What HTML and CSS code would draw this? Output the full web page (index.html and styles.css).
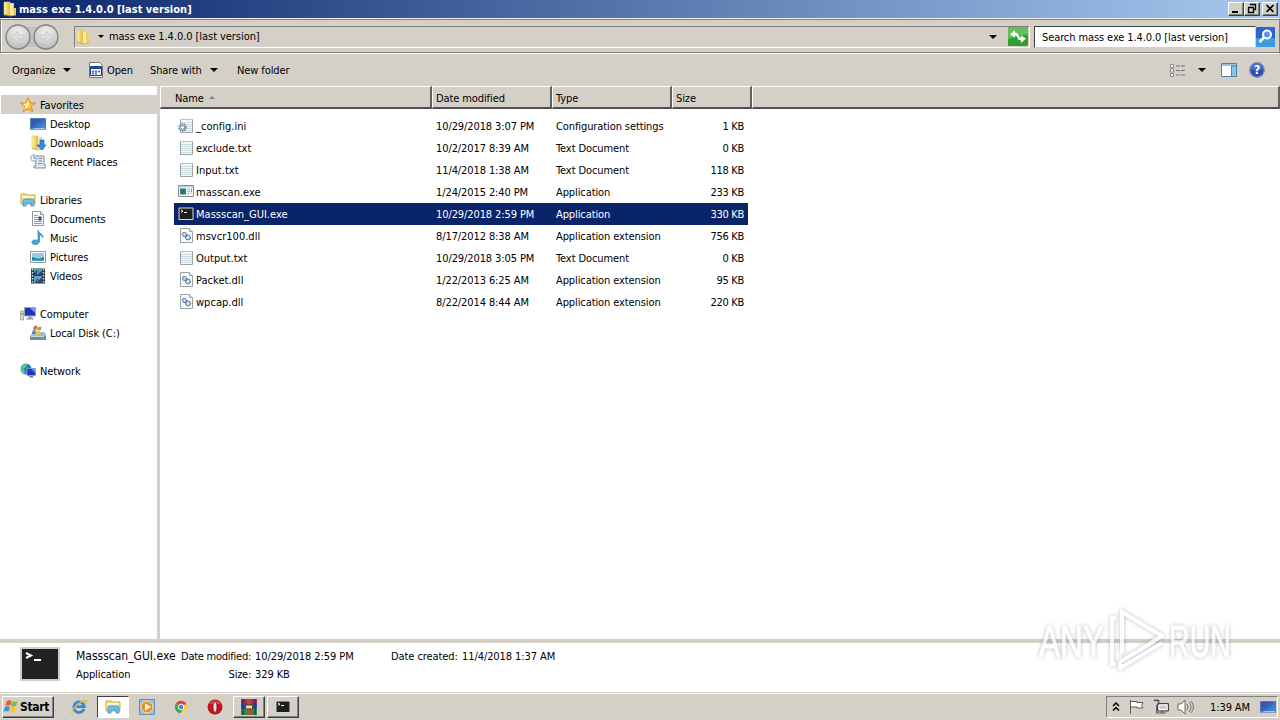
FILE: index.html
```html
<!DOCTYPE html>
<html lang="en">
<head>
  <meta charset="UTF-8">
  <title>mass exe 1.4.0.0 [last version]</title>
  <link rel="stylesheet" href="styles.css">
</head>
<body>
  <!-- icon set -->
  <svg width="0" height="0" class="defs">
    <defs>
      <linearGradient id="gGold" x1="0" x2="1"><stop offset="0" stop-color="#fdf3ae"/><stop offset="1" stop-color="#e2b93b"/></linearGradient>
      <linearGradient id="gBlue" x1="0" y1="0" x2="1" y2="1"><stop offset="0" stop-color="#1b3f9c"/><stop offset="1" stop-color="#4f9be6"/></linearGradient>
      <radialGradient id="gNav" cx=".5" cy=".3" r=".75"><stop offset="0" stop-color="#f0f0f0"/><stop offset=".6" stop-color="#d0d0d0"/><stop offset="1" stop-color="#b4b4b4"/></radialGradient>
    </defs>
    <symbol id="folder" viewBox="0 0 16 16">
      <path d="M2 1h6v13H2z" fill="url(#gGold)" stroke="#e3c765" stroke-width=".6"/>
      <path d="M8 2h4v5h2v7l-6 1z" fill="#ecca62"/>
      <path d="M8 2l3 1v5l1 6-4 1z" fill="#fbeb9b"/>
      <path d="M2 13l6 2 6-1" fill="none" stroke="#cfa740" stroke-width=".8"/>
    </symbol>
    <symbol id="star" viewBox="0 0 16 16"><path d="M8 .8l2 5 5.4.3-4.200 3.400 1.500 5.200L8 11.800l-4.700 2.900 1.500-5.200L.6 6.100 6 5.800z" fill="#fdc62f" stroke="#e2892a"/><path d="M8 3l1.300 3.600L8 10 4 12l1.300-3L3 7l3.500-.4z" fill="#fff09a"/></symbol>
    <symbol id="desktop" viewBox="0 0 16 16"><path d="M.5 2.500h15v11H.5z" fill="url(#gBlue)" stroke="#5579b4"/><path d="M1 3h8L1 9z" fill="#3a58ab"/><path d="M1 12h14v1.500H1z" fill="#a7c5e8"/><path d="M1 12h3v1H1z" fill="#2ca3dc"/></symbol>
    <symbol id="downloads" viewBox="0 0 16 16"><use href="#folder"/><path d="M10 5h4v5h2l-4 5-5-5h3z" fill="#2f8fdc" stroke="#1c62ae" stroke-width=".7"/></symbol>
    <symbol id="recent" viewBox="0 0 16 16"><path d="M5 2h9v9h2v3H4v-2h2z" fill="#dce7ee" stroke="#7c93a3"/><circle cx="4" cy="4" r="3.300" fill="#eef4f8" stroke="#93a8b5"/><path d="M4 2v2.200h2M9 4.500h3M9 7h3M8 9.500h4" fill="none" stroke="#6d8aa0"/></symbol>
    <symbol id="libs" viewBox="0 0 16 16"><path d="M1 2h5l1 1h8v9H1z" fill="#f6df82" stroke="#cfa93e"/><path d="M2 5h12" stroke="#fff7c8" stroke-width="2"/><path d="M3 9q0-2 2-2h7q2 0 2 2v5h-3v-3H6v3H3z" fill="#6cc0ec" stroke="#3a91c8" stroke-width=".8"/></symbol>
    <symbol id="doc" viewBox="0 0 16 16"><path d="M2.500.5h8l3 3v11h-11z" fill="#fff" stroke="#8a98a8"/><path d="M10.500.5v3h3" fill="#dce6ee" stroke="#8a98a8"/><path d="M4 4.500h4M4 6.500h4M4 8.500h4M4 10.500h8M4 12.500h8" stroke="#7ba0c6"/><path d="M8.500 5.500h3v4h-3z" fill="#274c86"/></symbol>
    <symbol id="music" viewBox="0 0 16 16"><path d="M8 0c0 3 5 3 5 8-1-3-3-3-3.500-3v6c0 3-3 4-5.500 3.400S1 11 4 10c1.500-.3 3 0 4 .5z" fill="#43a9de" stroke="#1d74b4" stroke-width=".6"/></symbol>
    <symbol id="pics" viewBox="0 0 16 16"><path d="M.5 2.500h15v11H.5z" fill="#fff" stroke="#8c99a3"/><path d="M2 4h12v8H2z" fill="#8fcdee"/><path d="M2 8c3 1 7 3 12 0v3H2z" fill="#287d71"/><path d="M2 10.500h12V12H2z" fill="#3da8d4"/></symbol>
    <symbol id="videos" viewBox="0 0 16 16"><path d="M1 .5h14v15H1z" fill="#2b3540"/><path d="M4 1h8v6H4z" fill="#4a9dc6"/><path d="M4 8h8v7H4z" fill="#57a9d0"/><path d="M4 5l3-3 2 3 3-2v4H4zM5 15l2-5 2 2 3-3v6z" fill="#1d4b85"/><path d="M7 3l2 2-2 2zM8 10l1 2-2 2z" fill="#d67c5e"/><path d="M2.500 1v14M13.500 1v14" stroke="#e3e9ec" stroke-width="1.400" stroke-dasharray="1.500 1.500"/></symbol>
    <symbol id="computer" viewBox="0 0 16 16"><path d="M.5 5h3v9h-3z" fill="#d6dcd2" stroke="#8a938b" stroke-width=".7"/><path d="M1 7h2v2H1z" fill="#77c14c"/><path d="M4.500 1.500h11v8.500h-11z" fill="#2033b4" stroke="#9aa3b8"/><path d="M10 2h5v5z" fill="#7797ee"/><path d="M8.500 10.500h3V12h2v1.500h-7V12h2z" fill="#8d97a5"/></symbol>
    <symbol id="disk" viewBox="0 0 16 16"><path d="M2 9l2-2h10l2 2v5H0v-3z" fill="#a7bac4"/><path d="M0 11h16v4H0z" fill="#6d8d9c"/><path d="M1 11.500h13" stroke="#c6dbe4"/><path d="M12 13h2v1h-2z" fill="#58d547"/><use href="#winflag" x="1" y="0" width="12" height="11"/></symbol>
    <symbol id="winflag" viewBox="0 0 16 16"><path d="M3.500 2C6 .5 7 1.500 8.500 2L7 7.200C5 6.300 4 6.500 2 7.300z" fill="#ef5b28"/><path d="M9.300 2.300c2 1 3.500.7 5.700-.3l-1.500 5.300c-2 1-3.700.8-5.600.1z" fill="#83bb3d"/><path d="M1.700 8.300c2-1 3.500-.8 5-.1L5.200 13.500c-1.700-.8-3-.8-5.200.1z" fill="#3b8ede"/><path d="M7.600 8.500c2 .8 3.500.9 5.600 0l-1.500 5.300c-2 1-3.600.7-5.500-.1z" fill="#fbc42e"/></symbol>
    <symbol id="network" viewBox="0 0 16 16"><circle cx="6" cy="6" r="5.500" fill="#2b83b9"/><path d="M1 4c2-3 4-3 6-3L6 4 3 6l2 3-1 2C1 9 .5 7 1 4z" fill="#5ccb86"/><path d="M7 5.500h8.500v7H7z" fill="#1a39bd" stroke="#8c9fcf" stroke-width=".8"/><path d="M11 6h4v4z" fill="#6989ea"/><path d="M9.500 13h3.500v1.500H9.500z" fill="#637489"/></symbol>
    <symbol id="txt" viewBox="0 0 16 16"><path d="M2.500 1.500h12v13h-12z" fill="#f4f8f8" stroke="#9aa2a2"/><path d="M3 4.500h11M3 6.500h11M3 8.500h11M3 10.500h11M3 12.500h11" stroke="#c9dade"/><path d="M3 1.500h11" stroke="#e8eeee" stroke-width="2" stroke-dasharray="1 1.500"/></symbol>
    <symbol id="ini" viewBox="0 0 16 16"><use href="#txt"/><circle cx="4.500" cy="9.500" r="3.500" fill="#e3eaee" stroke="#657b8d" stroke-width="1.600" stroke-dasharray="1.400 .8"/><circle cx="4.500" cy="9.500" r="2" fill="#fff" stroke="#657b8d"/></symbol>
    <symbol id="app" viewBox="0 0 16 16"><path d="M.5 1.500h15v11H.5z" fill="#f6f8f8" stroke="#838e94"/><path d="M1 2h14v1.500H1z" fill="#c5d2da"/><path d="M2 4.500h6v6H2z" fill="#31826c"/><path d="M4 5.500h2v4H4z" fill="#2d6b84"/><path d="M9.500 5.500h2M9.500 7.500h2M9.500 9.500h2M13.500 4.500v4" stroke="#8198a6"/></symbol>
    <symbol id="dll" viewBox="0 0 16 16"><path d="M2.500.5h9l3 3v11h-12z" fill="#fbfcfc" stroke="#9aa2a2"/><path d="M11.500.5v3h3" fill="#e8edef" stroke="#9aa2a2"/><circle cx="6.500" cy="6.500" r="2" fill="#d8e8f4" stroke="#476f9c" stroke-width="1.300" stroke-dasharray="1.300 .5"/><circle cx="10" cy="9.500" r="2.300" fill="#d8e8f4" stroke="#3c659a" stroke-width="1.300" stroke-dasharray="1.300 .5"/></symbol>
    <symbol id="term" viewBox="0 0 16 16"><path d="M1 2h14v11.500H1z" fill="#1e1e1e" stroke="#d8d8d8"/><path d="M3 4l2 1.200L3 6.500M6 6.500h3" fill="none" stroke="#fff"/></symbol>
  </svg>

  <div class="titlebar">
    <svg class="ico"><use href="#folder"/></svg>
    <span class="title">mass exe 1.4.0.0 [last version]</span>
    <div class="winbtns">
      <span class="winbtn"><svg viewBox="0 0 14 12"><path d="M3 8h6v2H3z"/></svg></span>
      <span class="winbtn"><svg viewBox="0 0 14 12"><path d="M5.500 2v-.5h5v5H9M5 1.500h6M3.500 5v4.500h5V5M3 4.500h6" fill="none" stroke="#000" stroke-width="1.300"/></svg></span>
      <span class="winbtn close"><svg viewBox="0 0 14 12"><path d="M3.500 2l7 7M10.500 2l-7 7" stroke="#000" stroke-width="1.700"/></svg></span>
    </div>
  </div>

  <div class="addressband">
    <svg class="nav" viewBox="0 0 56 28">
      <rect x="7" y="4" width="42" height="20" rx="8" fill="#c6c3bf"/>
      <circle cx="14" cy="14" r="12" fill="url(#gNav)" stroke="#82807d" stroke-width="1.300"/>
      <circle cx="42" cy="14" r="12" fill="url(#gNav)" stroke="#82807d" stroke-width="1.300"/>
      <path d="M14 8l-6 6 6 6v-4h6v-4h-6zM42 8l6 6-6 6v-4h-6v-4h6z" fill="#dedede" stroke="#cacaca"/>
    </svg>
    <div class="address">
      <svg class="ico"><use href="#folder"/></svg>
      <i class="arrow small"></i>
      <span>mass exe 1.4.0.0 [last version]</span>
      <i class="arrow"></i>
      <svg class="refresh" viewBox="0 0 20 19">
        <rect width="20" height="19" rx="1" fill="#2f9f36"/><path d="M0 0h20v7L0 12z" fill="#62bf5a"/>
        <path d="M7 3L2 7.500l5 3V8.500c2 0 3 2 3 5 2-4 0-8-3-8zM13 16l5-4.500-5-3v2c-2 0-3-2-3-5-2 4 0 8 3 8z" fill="#fff"/>
      </svg>
    </div>
    <div class="search">Search mass exe 1.4.0.0 [last version]</div>
    <svg class="searchbtn" viewBox="0 0 19 20">
      <rect width="19" height="20" rx="1" fill="#2b63d0"/><path d="M0 11h19v9H0z" fill="#3b9be5"/>
      <circle cx="11" cy="7.500" r="4" fill="#5c94e8" stroke="#fff" stroke-width="2"/><path d="M8 10.500L3.500 15" stroke="#fff" stroke-width="2.500"/>
    </svg>
  </div>

  <div class="toolbar">
    <span class="t-org">Organize</span><i class="arrow"></i>
    <svg class="ico open" viewBox="0 0 16 16"><path d="M1.500.5h10l3 3v12h-13z" fill="#fff" stroke="#777"/><path d="M2.500 4.500h11v9h-11z" fill="#eaf1fb" stroke="#1b397f"/><path d="M2 4h12v3H2z" fill="#21469b"/><path d="M4 9.500h2m1 0h2m1 0h2M4 11.500h2m1 0h2" stroke="#45679f" stroke-width="1.300"/></svg>
    <span class="t-open">Open</span>
    <span class="t-share">Share with</span><i class="arrow"></i>
    <span class="t-new">New folder</span>
    <div class="viewtools">
      <svg class="view" viewBox="0 0 16 13"><path d="M.5.500h3v3h-3zM.5 5h3v3h-3zM.5 9.500h3v3h-3z" fill="#fff" stroke="#85878a"/><path d="M6 2h4m1 0h4M6 6.500h4m1 0h4M6 11h4m1 0h4" stroke="#6c7581"/></svg>
      <i class="arrow"></i>
      <svg class="pane" viewBox="0 0 17 14"><path d="M.5.500h15v13H.5z" fill="#fff" stroke="#4d82a5"/><path d="M1 1h14v2H1z" fill="#9dc4dc"/><path d="M10.500 3h5v10.500h-5z" fill="#85c5e6" stroke="#4d82a5"/></svg>
      <svg class="help" viewBox="0 0 16 16"><circle cx="8" cy="8" r="7.300" fill="#2951b3" stroke="#8093ba" stroke-width="1.300"/><path d="M2 7a6 6 0 0 1 12 0q-6 2-12 0z" fill="#4d73c7"/><text x="8" y="12.300" text-anchor="middle" font-size="12" font-weight="bold" fill="#fff">?</text></svg>
    </div>
  </div>

  <div class="main">
    <div class="sidebar">
      <div class="node root selected"><svg class="ico"><use href="#star"/></svg><span>Favorites</span></div>
      <div class="node"><svg class="ico"><use href="#desktop"/></svg><span>Desktop</span></div>
      <div class="node"><svg class="ico"><use href="#downloads"/></svg><span>Downloads</span></div>
      <div class="node last"><svg class="ico"><use href="#recent"/></svg><span>Recent Places</span></div>
      <div class="node root"><svg class="ico"><use href="#libs"/></svg><span>Libraries</span></div>
      <div class="node"><svg class="ico"><use href="#doc"/></svg><span>Documents</span></div>
      <div class="node"><svg class="ico"><use href="#music"/></svg><span>Music</span></div>
      <div class="node"><svg class="ico"><use href="#pics"/></svg><span>Pictures</span></div>
      <div class="node last"><svg class="ico"><use href="#videos"/></svg><span>Videos</span></div>
      <div class="node root"><svg class="ico"><use href="#computer"/></svg><span>Computer</span></div>
      <div class="node last"><svg class="ico"><use href="#disk"/></svg><span>Local Disk (C:)</span></div>
      <div class="node root"><svg class="ico"><use href="#network"/></svg><span>Network</span></div>
    </div>
    <div class="files">
      <div class="header">
        <div class="col name">Name<i class="sort"></i></div>
        <div class="col">Date modified</div>
        <div class="col">Type</div>
        <div class="col">Size</div>
        <div class="col"></div>
      </div>
      <div class="rows">
        <div class="row"><svg class="ico"><use href="#ini"/></svg><span class="file">_config.ini</span><span>10/29/2018 3:07 PM</span><span>Configuration settings</span><span class="size">1 KB</span></div>
        <div class="row"><svg class="ico"><use href="#txt"/></svg><span class="file">exclude.txt</span><span>10/2/2017 8:39 AM</span><span>Text Document</span><span class="size">0 KB</span></div>
        <div class="row"><svg class="ico"><use href="#txt"/></svg><span class="file">Input.txt</span><span>11/4/2018 1:38 AM</span><span>Text Document</span><span class="size">118 KB</span></div>
        <div class="row"><svg class="ico"><use href="#app"/></svg><span class="file">masscan.exe</span><span>1/24/2015 2:40 PM</span><span>Application</span><span class="size">233 KB</span></div>
        <div class="row selected"><svg class="ico"><use href="#term"/></svg><span class="file">Massscan_GUI.exe</span><span>10/29/2018 2:59 PM</span><span>Application</span><span class="size">330 KB</span></div>
        <div class="row"><svg class="ico"><use href="#dll"/></svg><span class="file">msvcr100.dll</span><span>8/17/2012 8:38 AM</span><span>Application extension</span><span class="size">756 KB</span></div>
        <div class="row"><svg class="ico"><use href="#txt"/></svg><span class="file">Output.txt</span><span>10/29/2018 3:05 PM</span><span>Text Document</span><span class="size">0 KB</span></div>
        <div class="row"><svg class="ico"><use href="#dll"/></svg><span class="file">Packet.dll</span><span>1/22/2013 6:25 AM</span><span>Application extension</span><span class="size">95 KB</span></div>
        <div class="row"><svg class="ico"><use href="#dll"/></svg><span class="file">wpcap.dll</span><span>8/22/2014 8:44 AM</span><span>Application extension</span><span class="size">220 KB</span></div>
      </div>
    </div>
  </div>

  <div class="details">
    <svg class="thumb" viewBox="0 0 40 34"><path d="M1 1h38v32H1z" fill="#222" stroke="#cfcfcf" stroke-width="2"/><path d="M6 6l5 2.500L6 11M14 13h7" fill="none" stroke="#fff" stroke-width="2"/></svg>
    <div class="grid">
      <span class="fname">Massscan_GUI.exe</span><span class="label">Date modified:</span><span>10/29/2018 2:59 PM</span><span>Date created:</span><span>11/4/2018 1:37 AM</span>
      <span>Application</span><span class="label">Size:</span><span>329 KB</span>
    </div>
  </div>

  <div class="taskbar">
    <div class="start"><svg viewBox="0 0 16 15"><use href="#winflag" width="16" height="15"/></svg>Start</div>
    <div class="tasks">
      <div class="task"><svg class="ico" viewBox="0 0 16 16"><path d="M13 10a5.300 5.300 0 1 1 .3-2.300H5" fill="none" stroke="#2f8ade" stroke-width="2.700"/><path d="M1 14.500C-.5 11 9 2 14.500 1.500c2 0 .5 3-.5 4" fill="none" stroke="#e5b83c" stroke-width="1.300"/></svg></div>
      <div class="task active"><svg class="ico"><use href="#libs"/></svg></div>
      <div class="task"><svg class="ico" viewBox="0 0 16 16"><path d="M.5.500h15v15H.5z" fill="#91c1e4" stroke="#5d91be"/><circle cx="8" cy="8" r="6" fill="#f18e21" stroke="#fbe0b5"/><path d="M6 4.500l6 3.500-6 3.500z" fill="#fff"/></svg></div>
      <div class="task"><svg class="ico chrome" viewBox="0 0 16 16"><circle cx="8" cy="8" r="7" fill="#fccf33"/><path d="M8 8L2 4.300A7 7 0 0 1 14.500 5H8z" fill="#df4634"/><path d="M2 4.300A7 7 0 0 0 7.500 15l2.700-5L8 8z" fill="#3aa757"/><circle cx="8" cy="8" r="3.200" fill="#4285e8" stroke="#fff"/></svg></div>
      <div class="task"><svg class="ico" viewBox="0 0 16 16"><circle cx="8" cy="8" r="7.500" fill="#c2151b"/><path d="M2 5a7 7 0 0 1 12 0z" fill="#d24a45"/><ellipse cx="8" cy="8" rx="2" ry="5.500" fill="#e8dddd" stroke="#7e090d" stroke-width=".7"/></svg></div>
      <div class="task raised"><svg class="ico" viewBox="0 0 16 16"><path d="M0 0h16v5H0z" fill="#a42a65"/><path d="M0 5h16v5.500H0z" fill="#2c50b1"/><path d="M0 10.500h16V16H0z" fill="#2c8c3d"/><path d="M6 0h4v16H6z" fill="#c2482c"/><path d="M4.500 6h7v4h-7z" fill="#f0dc9c" stroke="#55391c"/><path d="M2 0v16M14 0v16" stroke="#1a2746"/></svg></div>
      <div class="task raised"><svg class="ico"><use href="#term"/></svg></div>
    </div>
    <div class="tray">
      <svg class="chev" viewBox="0 0 8 10"><path d="M1 4l3-3 3 3M1 8.500l3-3 3 3" fill="none" stroke="#000" stroke-width="1.500"/></svg>
      <svg class="flag" viewBox="0 0 16 16"><path d="M1.500 1v14M2 2.500h6v1h6l-1.500 3L14 9H8V8H2" fill="#fff" stroke="#5b5b5b"/></svg>
      <svg class="net" viewBox="0 0 16 16"><path d="M4.500 4.500h11v7.500h-11z" fill="#bbb" stroke="#444"/><path d="M6 6h8v4.500H6z" fill="#ccc" stroke="#fff"/><path d="M.7 1.500h5v3.500l-2 1.500v7.500H13M2 0v2.500M4.500 0v2.500M9 12v2" fill="none" stroke="#555" stroke-width="1.200"/></svg>
      <svg class="vol" viewBox="0 0 17 16"><path d="M1 5h3l4-4v14l-4-4H1z" fill="#fff" stroke="#666"/><path d="M10 5q2 3 0 6M12 3q4 5 0 10M14 2q5 6 0 12" fill="none" stroke="#777"/></svg>
      <span class="clock">1:39 AM</span>
      <svg class="ico"><use href="#desktop"/></svg>
    </div>
  </div>

  <svg class="watermark" viewBox="0 0 250 80">
    <g class="wm-text">
      <text x="9" y="57" textLength="65" lengthAdjust="spacingAndGlyphs">ANY</text>
      <text x="139" y="57" textLength="62" lengthAdjust="spacingAndGlyphs">RUN</text>
    </g>
    <path d="M86 18h-4v46h4M92 54V12l40 24-24 15M90 68l42-25M90 62l30-18M90 62v8" fill="none" stroke="#fff" stroke-width="4"/>
  </svg>
</body>
</html>
```

FILE: styles.css
```css
* { box-sizing: border-box; }
body { margin: 0; width: 1280px; height: 720px; overflow: hidden; display: flex; flex-direction: column; background: #d4d0c8; color: #000; font: 11px "DejaVu Sans Condensed", "DejaVu Sans", sans-serif; font-stretch: condensed; letter-spacing: -0.1px; white-space: nowrap; }
svg { display: block; flex: none; }
.defs { position: absolute; }
.ico { width: 16px; height: 16px; }
.arrow { width: 0; height: 0; border: 4px solid transparent; border-top-color: #000; border-bottom: 0; }
.arrow.small { border-width: 3px; border-bottom: 0; }

/* title bar */
.titlebar { height: 18px; display: flex; align-items: center; padding: 0 2px; background: linear-gradient(90deg, #0a246a, #a6caf0); color: #fff; font-weight: bold; letter-spacing: 0.02px; }
.title { margin-left: 1px; flex: 1; }
.winbtns { display: flex; }
.winbtn { width: 16px; height: 14px; background: #d4d0c8; border: 1px solid; border-color: #fff #404040 #404040 #fff; box-shadow: inset -1px -1px #808080; }
.winbtn.close { margin-left: 2px; }
.winbtn svg { width: 14px; height: 12px; }

/* address band */
.addressband { height: 36px; display: flex; align-items: center; padding: 1px 2px 0 3px; border: 1px solid #808080; border-top-color: #f4f2ee; border-bottom-color: #fff; box-shadow: inset 0 1px #808080, inset 0 -1px #808080, inset 1px 0 #fff; }
.nav { width: 56px; height: 28px; }
.address { margin-left: 14px; width: 956px; height: 22px; display: flex; align-items: center; border: 1px solid; border-color: #808080 #fff #fff #808080; letter-spacing: -0.06px; }
.address .arrow.small { margin: 0 5px 0 7px; }
.address span { flex: 1; }
.refresh { width: 20px; height: 19px; margin: 0 1px 0 11px; }
.search { margin-left: 4px; width: 222px; height: 22px; padding: 0 7px; line-height: 21px; background: #fff; border: 1px solid; border-color: #404040 #d4d0c8 #d4d0c8 #404040; }
.searchbtn { width: 19px; height: 20px; }

/* command bar */
.toolbar { height: 32px; display: flex; align-items: center; padding: 0 15px 0 12px; }
.t-org { width: 51px; }
.open { margin-left: 17px; }
.t-open { width: 43px; margin-left: 3px; }
.t-share { width: 60px; }
.t-new { margin-left: 19px; }
.viewtools { margin-left: auto; display: flex; align-items: center; }
.view { width: 16px; height: 13px; margin-right: 12px; }
.pane { width: 17px; height: 14px; margin: 0 11px 0 15px; }
.help { width: 16px; height: 16px; }

.main { height: 553px; display: flex; }
.sidebar { width: 160px; padding: 9px 0 0 1px; background: #fff; border-right: 3px solid #d4d0c8; }
.node { height: 19px; display: flex; align-items: center; padding-left: 29px; gap: 4px; }
.node span { padding-top: 2px; }
.node.root { padding-left: 19px; }
.node.last { margin-bottom: 19px; }
.node.selected { background: #d4d0c8; }

/* file list */
.files { flex: 1; background: #fff; }
.header { height: 23px; display: grid; grid-template-columns: 272px 120px 120px 80px 1fr; grid-template-rows: 23px; background: #d4d0c8; }
.col { padding: 3px 0 0 3px; border: 1px solid; border-width: 1px 2px 2px 1px; border-color: #fff #606060 #505050 #fff; line-height: 17px; }
.col.name { padding-left: 14px; }
.sort { display: inline-block; margin: 0 0 3px 5px; border: 3px solid transparent; border-bottom-color: #808080; border-top: 0; }
.rows { margin: 6px 0 0 14px; width: 574px; }
.row { height: 22px; display: grid; grid-template-columns: 18px 240px 120px 110px 1fr; align-items: center; padding: 0 4px; }
.row .ico { margin-top: -1px; }
.row.selected { background: #0a246a; color: #fff; }
.file { letter-spacing: 0.02px; }
.size { text-align: right; letter-spacing: -0.3px; }

/* details pane */
.details { height: 53px; display: flex; padding: 4px 0 0 20px; background: #fff; border-top: 4px solid #d4d0c8; }
.thumb { width: 40px; height: 34px; }
.grid { margin: 1px 0 0 16px; display: grid; grid-template-columns: 100px 75px 140px 67px auto; grid-auto-rows: 18px; line-height: 18px; letter-spacing: -0.08px; }
.grid .label { text-align: right; letter-spacing: -0.25px; }
.grid .label + span { padding-left: 4px; }
.grid span:nth-child(5) { padding-left: 4px; }
.fname { font-size: 12px; line-height: 16px; letter-spacing: 0; }

/* taskbar */
.taskbar { height: 28px; display: flex; align-items: center; padding: 0 2px; border-top: 1px solid #d4d0c8; box-shadow: inset 0 1px #fff; }
.start { width: 52px; height: 22px; display: flex; align-items: center; gap: 1px; font-weight: bold; font-size: 12px; letter-spacing: -0.3px; border: 1px solid; border-color: #fff #404040 #404040 #fff; box-shadow: inset -1px -1px #808080; }
.start svg { width: 16px; height: 15px; }
.tasks { margin-left: 9px; display: flex; gap: 2px; }
.task { width: 32px; height: 22px; display: flex; align-items: center; justify-content: center; }
.task.active { background: #fff; border: 1px solid; border-color: #404040 #fff #fff #404040; }
.task.raised { border: 1px solid; border-color: #fff #404040 #404040 #fff; box-shadow: inset -1px -1px #808080; }
.chrome { width: 14px; height: 14px; }
.tray { margin-left: auto; width: 172px; height: 22px; display: flex; align-items: center; padding-left: 5px; border: 1px solid; border-color: #808080 #fff #fff #808080; }
.chev { width: 8px; height: 10px; margin-right: 9px; }
.flag, .net { width: 16px; height: 16px; margin-right: 8px; }
.vol { width: 17px; height: 16px; }
.clock { margin-left: 16px; padding-top: 2px; width: 50px; letter-spacing: -0.1px; }

.watermark { position: absolute; left: 1030px; top: 600px; width: 250px; height: 80px; opacity: .75; filter: drop-shadow(0 0 2px rgba(0,0,0,.35)); }
.wm-text { font: 45px "Liberation Sans", sans-serif; fill: #fff; stroke: #fff; stroke-width: 1px; letter-spacing: 0; }
```
